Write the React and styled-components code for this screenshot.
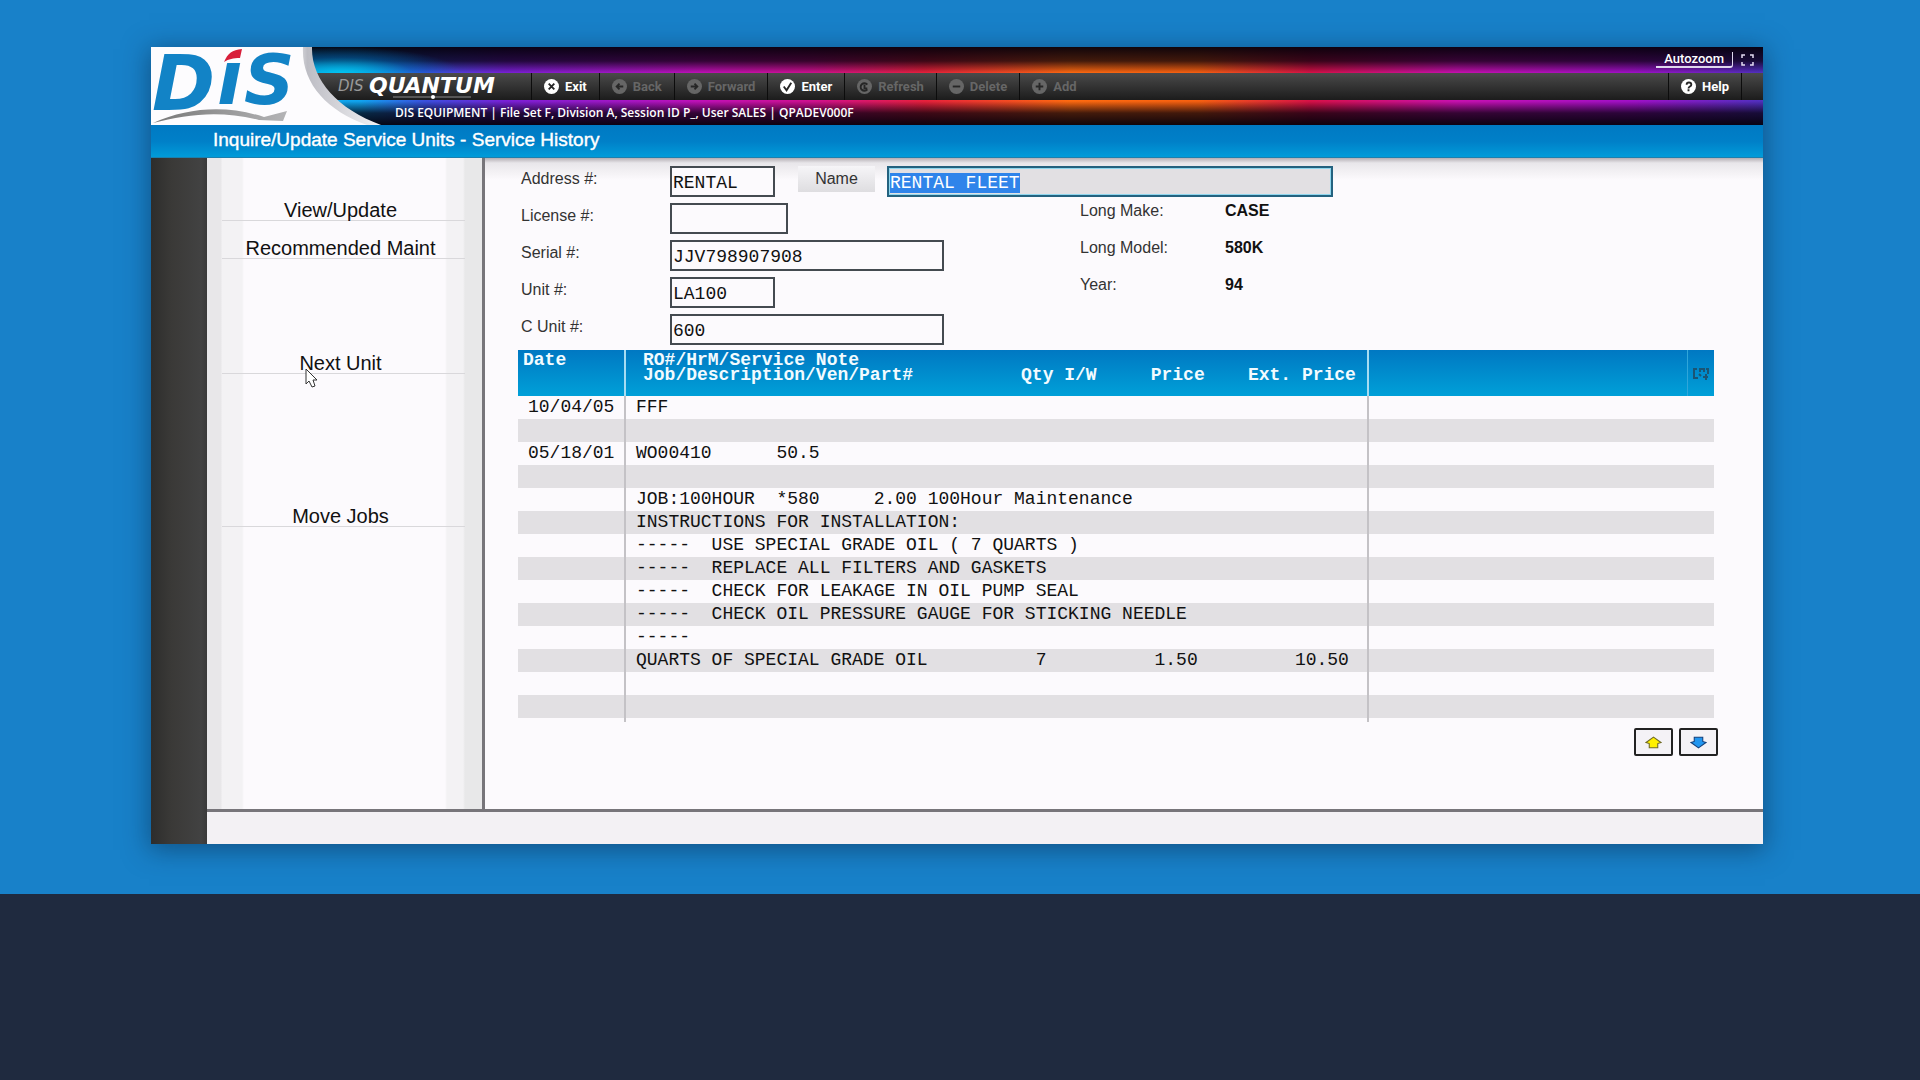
import { useEffect, useRef } from "react"
import styled, { createGlobalStyle } from "styled-components"

const toolbar = [
    { label: "Exit", icon: "x", enabled: true },
    { label: "Back", icon: "left" },
    { label: "Forward", icon: "right" },
    { label: "Enter", icon: "check", enabled: true },
    { label: "Refresh", icon: "refresh" },
    { label: "Delete", icon: "minus" },
    { label: "Add", icon: "plus" },
]

const menu = [
    { label: "View/Update", skip: 0 },
    { label: "Recommended Maint", skip: 0 },
    { label: "Next Unit", skip: 2, pointer: true },
    { label: "Move Jobs", skip: 3 },
]

const lines = [
    { date: "10/04/05", text: "FFF" },
    { date: "", text: "" },
    { date: "05/18/01", text: "WO00410      50.5" },
    { date: "", text: "" },
    { date: "", text: "JOB:100HOUR  *580     2.00 100Hour Maintenance" },
    { date: "", text: "INSTRUCTIONS FOR INSTALLATION:" },
    { date: "", text: "-----  USE SPECIAL GRADE OIL ( 7 QUARTS )" },
    { date: "", text: "-----  REPLACE ALL FILTERS AND GASKETS" },
    { date: "", text: "-----  CHECK FOR LEAKAGE IN OIL PUMP SEAL" },
    { date: "", text: "-----  CHECK OIL PRESSURE GAUGE FOR STICKING NEEDLE" },
    { date: "", text: "-----" },
    { date: "", text: "QUARTS OF SPECIAL GRADE OIL          7          1.50         10.50" },
    { date: "", text: "" },
    { date: "", text: "" },
]

const marks = {
    x: "M5 5l6 6M11 5l-6 6",
    left: "M12 8H5M8 5L5 8l3 3",
    right: "M4 8h7M8 5l3 3-3 3",
    check: "M4 8l3 4 5-8",
    refresh: "M11 6a4 4 0 1 0 0 5M8 6v4h3",
    minus: "M4 8h8",
    plus: "M4 8h8M8 4v8",
    help: "M6 6c0-3 5-3 5 0 0 2-3 2-3 4M8 11v2",
}

function ToolIcon({ name }) {
    return (
        <svg width="15" height="15" viewBox="0 0 16 16" aria-hidden="true">
            <circle cx="8" cy="8" r="8" fill="currentColor"/>
            <path d={marks[name]} fill="none" stroke="#262626" strokeWidth="2"/>
        </svg>
    )
}

function Brand() {
    return (
        <BrandSvg viewBox="0 0 182 78" role="img" aria-label="DIS">
            <defs>
                <linearGradient id="paper" x1="0" x2="1">
                    <stop offset="0.6" stopColor="#ffffff"/>
                    <stop offset="0.68" stopColor="#bdbdc4"/>
                    <stop offset="1" stopColor="#f4f4f6"/>
                </linearGradient>
                <linearGradient id="swoosh" x1="0" x2="1">
                    <stop offset="0" stopColor="#777777"/>
                    <stop offset="1" stopColor="#b4b4b6"/>
                </linearGradient>
            </defs>
            <path d="M0 0H161C160 32 186 62 230 78H0Z" fill="url(#paper)"/>
            <path d="M0 0H152C150 36 176 64 216 78H0Z" fill="#fdfcfe"/>
            <LogoText x="1" y="63" $size={76}>D</LogoText>
            <LogoText x="66" y="57" $size={74}>ı</LogoText>
            <LogoText x="93" y="57" $size={70}>S</LogoText>
            <path d="M73 15C77 6 81 3 91 2L89 11C82 11 78 12 73 15Z" fill="#d81e3a"/>
            <path d="M2 76C38 60 76 58 113 70L136 64L132 74L108 73C70 63 36 67 2 76Z" fill="url(#swoosh)"/>
        </BrandSvg>
    )
}

function Product() {
    return (
        <ProductSvg viewBox="0 0 180 27" role="img" aria-label="DIS Quantum">
            <SmallMark x="5" y="18">DIS</SmallMark>
            <BigMark x="36" y="20">QUANTUM</BigMark>
            <path d="M60 24H138" stroke="#8c8c8c" strokeWidth="1"/>
            <circle cx="100" cy="24" r="2" fill="#ffffff"/>
        </ProductSvg>
    )
}

export default function App() {

    const nameRef = useRef(null)

    useEffect(()=>{
        nameRef.current.focus()
        nameRef.current.select()
    }, [])

    return (
        <>
            <GlobalStyle/>
            <Hero>
                <AppWindow>
                    <Header>
                        <Brand/>
                        <HeaderRows>
                            <ZoomRow>
                                <ZoomButton>Autozoom</ZoomButton>
                                <svg width="13" height="12" viewBox="0 0 13 12" aria-hidden="true">
                                    <path d="M4 1H1v3M1 8v3h3M9 1h3v3M12 8v3H9" fill="none" stroke="#e4dcf2" strokeWidth="1.5"/>
                                </svg>
                            </ZoomRow>
                            <Toolbar>
                                <Product/>
                                {toolbar.map(el=>
                                <ToolButton key={el.label} disabled={!el.enabled}>
                                    <ToolIcon name={el.icon}/>
                                    {el.label}
                                </ToolButton>)}
                                <HelpButton>
                                    <ToolIcon name="help"/>
                                    Help
                                </HelpButton>
                            </Toolbar>
                            <SessionRow>DIS EQUIPMENT | File Set F, Division A, Session ID P_, User SALES | QPADEV000F</SessionRow>
                        </HeaderRows>
                    </Header>
                    <TitleBar>Inquire/Update Service Units - Service History</TitleBar>
                    <Body>
                        <Sidebar>
                            {menu.map(el=>
                            <MenuButton key={el.label} $skip={el.skip}>
                                {el.label}
                                {el.pointer && <Pointer viewBox="0 0 13 20" aria-hidden="true">
                                    <path d="M1 1V16L4 13L7 19L10 18L8 12H12Z" fill="#ffffff" stroke="#333333"/>
                                </Pointer>}
                            </MenuButton>)}
                        </Sidebar>
                        <Main>
                            <Form>
                                <Label htmlFor="address">Address #:</Label>
                                <Field id="address" $width={105} defaultValue="RENTAL"/>
                                <NameButton type="button">Name</NameButton>
                                <NameField ref={nameRef} aria-label="Name" defaultValue="RENTAL FLEET"/>

                                <Label htmlFor="license">License #:</Label>
                                <Field id="license" $width={118}/>

                                <Label htmlFor="serial">Serial #:</Label>
                                <Field id="serial" $width={274} defaultValue="JJV798907908"/>

                                <Label htmlFor="unit">Unit #:</Label>
                                <Field id="unit" $width={105} defaultValue="LA100"/>

                                <Label htmlFor="cunit">C Unit #:</Label>
                                <Field id="cunit" $width={274} defaultValue="600"/>

                                <Info>
                                    <dt>Long Make:</dt><dd>CASE</dd>
                                    <dt>Long Model:</dt><dd>580K</dd>
                                    <dt>Year:</dt><dd>94</dd>
                                </Info>
                            </Form>
                            <History>
                                <colgroup>
                                    <DateCol/>
                                    <TextCol/>
                                    <col/>
                                    <ToolCol/>
                                </colgroup>
                                <thead>
                                    <tr>
                                        <th>Date</th>
                                        <th>{"RO#/HrM/Service Note\nJob/Description/Ven/Part#          Qty I/W     Price    Ext. Price"}</th>
                                        <th></th>
                                        <th>
                                            <svg width="16" height="12" viewBox="0 0 16 12" aria-hidden="true">
                                                <path d="M4 1H1V10H5M7 4V1H11V4M13 1H15V6M6 6L8 8M10 9H15M13 6V12" fill="none" stroke="#1b5574" strokeWidth="2"/>
                                            </svg>
                                        </th>
                                    </tr>
                                </thead>
                                <tbody>
                                    {lines.map((el, i)=>
                                    <Line key={i}>
                                        <td>{el.date}</td>
                                        <td>{el.text}</td>
                                        <td colSpan={2}></td>
                                    </Line>)}
                                </tbody>
                                <tfoot>
                                    <EndLine>
                                        <td></td>
                                        <td></td>
                                        <td colSpan={2}></td>
                                    </EndLine>
                                </tfoot>
                            </History>
                            <Paging>
                                <PageButton aria-label="Page up">
                                    <svg width="17" height="13" viewBox="0 0 16 12">
                                        <path d="M8 1L15 6L12 7V11H4V7L1 6Z" fill="#fff000" stroke="#6f6a22"/>
                                    </svg>
                                </PageButton>
                                <PageButton aria-label="Page down">
                                    <svg width="17" height="13" viewBox="0 0 16 12">
                                        <path d="M8 11L15 6L12 5V1H4V5L1 6Z" fill="#2196f0" stroke="#12407c"/>
                                    </svg>
                                </PageButton>
                            </Paging>
                        </Main>
                        <StatusBar/>
                    </Body>
                </AppWindow>
            </Hero>
        </>
    )
}

const GlobalStyle = createGlobalStyle`
    * {
        box-sizing: border-box;
    }

    body {
        margin: 0;
        background-color: #1f2a3f;
        font-family: "Liberation Sans", Arial, sans-serif;
    }

    button {
        font-family: inherit;
        border: none;
        background: none;
        padding: 0;
    }
`

const Hero = styled.div`
    background-color: #1881c9;
    padding: 47px 157px 50px 151px;
`

const AppWindow = styled.div`
    box-shadow: 0 4px 24px 2px rgba(10, 40, 70, 0.5);
`

const Header = styled.header`
    display: flex;
    height: 78px;
    background:
        linear-gradient(#4a4a4a, #1c1c1c) 0 26px / 100% 27px no-repeat,
        radial-gradient(120px 26px at 190px 26px, rgba(0, 200, 240, 0.9), rgba(0, 110, 200, 0.4) 60%, rgba(0, 60, 160, 0)),
        linear-gradient(rgba(4, 0, 10, 0.95), rgba(4, 0, 10, 0.75) 14px, rgba(4, 0, 10, 0) 26px, rgba(4, 0, 10, 0) 54px, rgba(4, 0, 10, 0.75) 66px, rgba(4, 0, 10, 0.95)),
        linear-gradient(90deg, #00c8f0 0, #10a4f0 13%, #3a50e0 17%, #7a20d8 22%, #c010b8 34%, #d01090 41%, #e8203c 48%, #ff6a10 57%, #f86010 65%, #d81048 72%, #c810b0 81%, #a010c8 92%, #5030c0 100%);
`

const BrandSvg = styled.svg`
    flex: none;
    width: 182px;
    height: 78px;
    overflow: visible;
`

const LogoText = styled.text`
    font-family: "DejaVu Sans", sans-serif;
    font-size: ${props=>props.$size}px;
    font-style: italic;
    font-weight: 700;
    fill: #1283c6;
`

const HeaderRows = styled.div`
    flex: 1;
    min-width: 0;
`

const ZoomRow = styled.div`
    height: 26px;
    display: flex;
    justify-content: flex-end;
    align-items: center;
    gap: 8px;
    padding-right: 9px;
`

const ZoomButton = styled.button`
    height: 16px;
    padding: 0 8px;
    color: #ffffff;
    font-family: Roboto, sans-serif;
    font-size: 13px;
    font-weight: 500;
    line-height: 12px;
    border-bottom: 2px solid #e0d8ee;
    border-right: 1px solid #e0d8ee;
    border-radius: 0 0 3px 0;
`

const Toolbar = styled.div`
    height: 27px;
    display: flex;
`

const ProductSvg = styled.svg`
    width: 180px;
    height: 27px;
    flex: none;
    margin-right: 18px;
    overflow: visible;
`

const SmallMark = styled.text`
    font: italic 15px "DejaVu Sans", sans-serif;
    fill: #9a9a9a;
`

const BigMark = styled.text`
    font: italic bold 22px "DejaVu Sans", sans-serif;
    fill: #ffffff;
`

const ToolButton = styled.button`
    display: flex;
    align-items: center;
    gap: 6px;
    padding: 0 12px;
    font-family: Roboto, sans-serif;
    font-size: 13px;
    font-weight: 700;
    color: #ffffff;
    border-left: 1px solid #0c0c0c;

    &:disabled {
        color: #666666;
    }
`

const HelpButton = styled(ToolButton)`
    margin-left: auto;
    margin-right: 21px;
    border-right: 1px solid #0c0c0c;
`

const SessionRow = styled.div`
    height: 25px;
    padding-left: 62px;
    color: #ffffff;
    font-family: "Open Sans", sans-serif;
    font-size: 12px;
    font-weight: 600;
    line-height: 26px;
    white-space: nowrap;
`

const TitleBar = styled.h1`
    height: 33px;
    margin: 0;
    padding-left: 62px;
    background: linear-gradient(#0079c3, #0080c8 50%, #009bd9 96%, #2b6f94);
    color: #ffffff;
    font-size: 19px;
    font-weight: 400;
    line-height: 29px;
    -webkit-text-stroke: 0.4px #ffffff;
`

const Body = styled.div`
    display: grid;
    grid-template-columns: 278px 1fr;
    padding-left: 56px;
    background: linear-gradient(90deg, #2d2d2c, #3a3937 20px, #424242 50px, #3a3a3a 56px);
`

const Sidebar = styled.nav`
    padding: 25px 17px 0 15px;
    border-right: 3px solid #77757a;
    background: linear-gradient(90deg, #e8e7e9 14px, #f3f2f4 15px, #f3f2f4 35px, #fcfafd 37px, #fcfafd 238px, #f3f2f4 240px, #f3f2f4 256px, #e8e8e9 258px);
`

const MenuButton = styled.button`
    display: flex;
    justify-content: center;
    align-items: flex-end;
    position: relative;
    width: 100%;
    height: 38px;
    margin-top: ${props=>props.$skip * 38 + (props.$skip > 0 ? 1 : 0)}px;
    padding-right: 6px;
    border-bottom: 1px solid #d9d8db;
    color: #111111;
    font-size: 20px;
    line-height: 20px;
`

const Pointer = styled.svg`
    position: absolute;
    left: 83px;
    top: 32px;
    width: 13px;
    height: 20px;
`

const Main = styled.main`
    padding: 8px 45px 53px 33px;
    background: linear-gradient(#b3aeb3, #e8e6ea 5px, #f3f1f4 14px, #fcfafd 22px);
`

const Form = styled.form`
    display: grid;
    grid-template-columns: 149px 128px 89px 193px 1fr;
    grid-auto-rows: 31px;
    row-gap: 6px;
    margin: 0 0 5px 3px;
`

const Label = styled.label`
    grid-column: 1;
    color: #333333;
    font-size: 16px;
    line-height: 26px;
`

const Field = styled.input`
    grid-column: 2;
    width: ${props=>props.$width}px;
    height: 31px;
    padding: 2px 1px 0;
    border: 2px solid #444a50;
    border-radius: 0;
    background-color: #fcfafd;
    color: #111111;
    font-family: "Liberation Mono", monospace;
    font-size: 18px;
    outline: none;
`

const NameButton = styled.button`
    grid-column: 3;
    grid-row: 1;
    width: 77px;
    height: 26px;
    background: linear-gradient(#f6f5f8, #dedde0);
    color: #333333;
    font-size: 16px;
`

const NameField = styled(Field)`
    grid-column: 4 / span 2;
    grid-row: 1;
    width: 446px;
    border-color: #24627f;
    background-color: #e2e0e3;
    box-shadow: inset 0 0 0 1px #8fd6ee;

    &::selection {
        background-color: #2f84ea;
        color: #ffffff;
    }
`

const Info = styled.dl`
    grid-column: 5;
    grid-row: 2 / span 3;
    display: grid;
    grid-template-columns: 145px 1fr;
    grid-auto-rows: 37px;
    margin: 0;
    color: #333333;
    font-size: 16px;
    line-height: 16px;

    dd {
        margin: 0;
        color: #111111;
        font-weight: 700;
    }
`

const History = styled.table`
    width: calc(100% - 4px);
    table-layout: fixed;
    border-collapse: separate;
    border-spacing: 0;
    font-family: "Liberation Mono", monospace;
    font-size: 18px;

    thead {
        background: linear-gradient(#0078c2, #00a0d8);
    }

    th {
        height: 46px;
        padding: 3px 5px 0;
        border-right: 2px solid #a6dcf2;
        color: #f2fbff;
        font-weight: 700;
        line-height: 15px;
        text-align: left;
        vertical-align: top;
        white-space: pre;
    }

    th:nth-child(2) {
        padding-left: 17px;
    }

    th:nth-child(3) {
        border-right: 1px solid #2fa6da;
    }

    th:nth-child(4) {
        padding-top: 18px;
        border: none;
    }

    td {
        padding: 0 10px;
        border-right: 2px solid #c4c2c6;
        color: #111111;
        white-space: pre;
    }

    td:last-child {
        border: none;
    }
`

const DateCol = styled.col`
    width: 108px;
`

const TextCol = styled.col`
    width: 743px;
`

const ToolCol = styled.col`
    width: 26px;
`

const Line = styled.tr`
    height: 23px;
    line-height: 23px;

    &:nth-child(even) {
        background-color: #e2e0e3;
    }
`

const EndLine = styled.tr`
    height: 4px;
    line-height: 4px;
`

const Paging = styled.div`
    display: flex;
    justify-content: flex-end;
    gap: 6px;
    margin-top: 6px;
`

const PageButton = styled.button`
    display: flex;
    justify-content: center;
    align-items: center;
    width: 39px;
    height: 28px;
    border: 2px solid #222222;
    border-radius: 2px;
    background-color: #f4f2f6;
`

const StatusBar = styled.footer`
    grid-column: 1 / span 2;
    height: 35px;
    border-top: 3px solid #77757a;
    background-color: #f3f1f4;
`
